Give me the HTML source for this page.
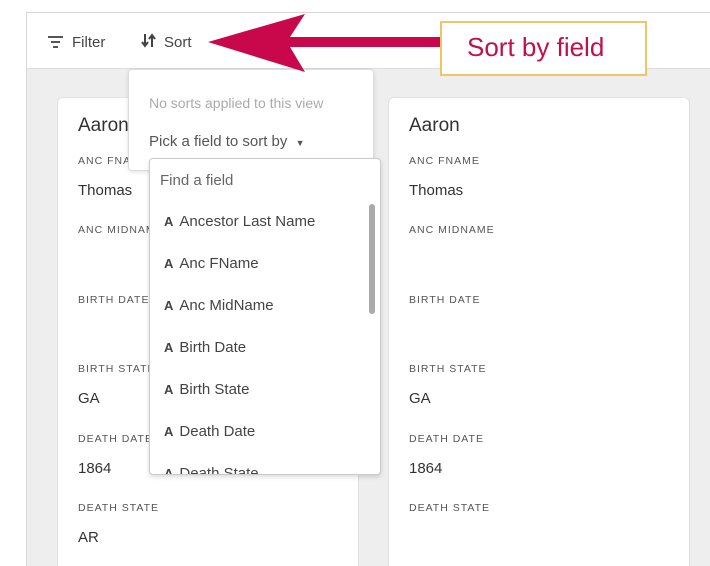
<!DOCTYPE html>
<html><head><style>
*{box-sizing:border-box;margin:0;padding:0}
html,body{width:710px;height:566px;overflow:hidden}
body{background:#fff;font-family:"Liberation Sans",sans-serif;color:#333}
#w{position:relative;width:710px;height:566px;overflow:hidden}
.panel{position:absolute;left:26px;top:12px;width:684px;height:554px;border:1px solid #d8d8d8;border-right:none;border-bottom:none;background:#eeeeee}
.tb{position:absolute;left:0;top:0;right:0;height:56px;background:#fff;border-bottom:1px solid #ddd}
.card{position:absolute;top:97px;width:302px;height:469px;background:#fff;border:1px solid #e2e2e2;border-bottom:none;border-radius:6px 6px 0 0}
.t{position:absolute;font-size:19px;color:#333}
.lab{position:absolute;font-size:10.5px;letter-spacing:1px;color:#555}
.val{position:absolute;font-size:15px;color:#333}
.pop{position:absolute;left:128px;top:69px;width:246px;height:102px;background:#fff;border:1px solid #ddd;border-radius:4px;box-shadow:0 1px 4px rgba(0,0,0,.12)}
.dd{position:absolute;left:149px;top:158px;width:232px;height:317px;background:#fff;border:1px solid #ccc;border-radius:4px;box-shadow:0 2px 5px rgba(0,0,0,.15);overflow:hidden}
.it{position:absolute;left:14px;font-size:15px;color:#444;white-space:nowrap}
.it b{font-size:13px;margin-right:6px;color:#444}
</style></head><body><div id="w">
<div class="panel"><div class="tb"></div></div>
<svg style="position:absolute;left:48px;top:35px" width="16" height="14"><rect x="0" y="1" width="15" height="2" fill="#555"/><rect x="3" y="6" width="9" height="2" fill="#555"/><rect x="5" y="11" width="5" height="2" fill="#555"/></svg>
<div style="position:absolute;left:72px;top:34px;font-size:15px;color:#444">Filter</div>
<svg style="position:absolute;left:141px;top:33px" width="16" height="16"><path d="M4 1v11M1 9l3 4 3-4M11 14V3M8 6l3-4 3 4" stroke="#444" stroke-width="2" fill="none"/></svg>
<div style="position:absolute;left:164px;top:34px;font-size:15px;color:#444">Sort</div>

<div class="card" style="left:57px">
<div class="t" style="left:20px;top:17px">Aaron</div>
<div class="lab" style="left:20px;top:57px">ANC FNAME</div><div class="val" style="left:20px;top:84px">Thomas</div>
<div class="lab" style="left:20px;top:126px">ANC MIDNAME</div>
<div class="lab" style="left:20px;top:196px">BIRTH DATE</div>
<div class="lab" style="left:20px;top:265px">BIRTH STATE</div><div class="val" style="left:20px;top:292px">GA</div>
<div class="lab" style="left:20px;top:335px">DEATH DATE</div><div class="val" style="left:20px;top:362px">1864</div>
<div class="lab" style="left:20px;top:404px">DEATH STATE</div><div class="val" style="left:20px;top:431px">AR</div>
</div>
<div class="card" style="left:388px">
<div class="t" style="left:20px;top:17px">Aaron</div>
<div class="lab" style="left:20px;top:57px">ANC FNAME</div><div class="val" style="left:20px;top:84px">Thomas</div>
<div class="lab" style="left:20px;top:126px">ANC MIDNAME</div>
<div class="lab" style="left:20px;top:196px">BIRTH DATE</div>
<div class="lab" style="left:20px;top:265px">BIRTH STATE</div><div class="val" style="left:20px;top:292px">GA</div>
<div class="lab" style="left:20px;top:335px">DEATH DATE</div><div class="val" style="left:20px;top:362px">1864</div>
<div class="lab" style="left:20px;top:404px">DEATH STATE</div>
</div>

<div class="pop">
<div style="position:absolute;left:20px;top:25px;font-size:14px;color:#aaa">No sorts applied to this view</div>
<div style="position:absolute;left:20px;top:63px;font-size:15px;color:#555">Pick a field to sort by <span style="font-size:9px;margin-left:4px">▼</span></div>
</div>
<div class="dd">
<div style="position:absolute;left:10px;top:13px;font-size:15px;color:#666">Find a field</div>
<div style="position:absolute;right:5px;top:45px;width:6px;height:110px;background:#aaa;border-radius:3px"></div>
<div class="it" style="top:54px"><b>A</b>Ancestor Last Name</div>
<div class="it" style="top:96px"><b>A</b>Anc FName</div>
<div class="it" style="top:138px"><b>A</b>Anc MidName</div>
<div class="it" style="top:180px"><b>A</b>Birth Date</div>
<div class="it" style="top:222px"><b>A</b>Birth State</div>
<div class="it" style="top:264px"><b>A</b>Death Date</div>
<div class="it" style="top:306px"><b>A</b>Death State</div>
</div>

<svg style="position:absolute;left:0;top:0" width="710" height="100">
<polygon points="208,42 305,14 290,37 445,37 445,47 290,47 305,72" fill="#c8084a"/>
</svg>
<div style="position:absolute;left:440px;top:21px;width:207px;height:55px;background:#fff;border:2px solid #f2c46a;font-size:26px;color:#c0104a;padding:9px 0 0 25px">Sort by field</div>
</div></body></html>
